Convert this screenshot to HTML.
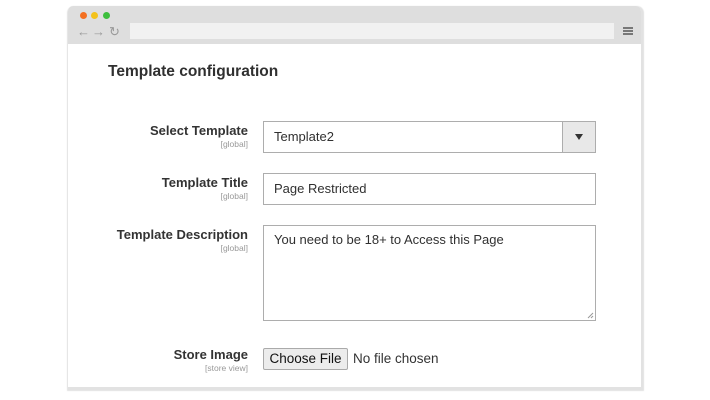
<!DOCTYPE html>
<html><head><style>
*{margin:0;padding:0;box-sizing:border-box}
body{width:710px;height:400px;background:#fff;position:relative;font-family:"Liberation Sans",sans-serif;overflow:hidden}
.frame{position:absolute;left:68px;top:6px;width:573px;height:381px;background:#fff;border-radius:5px 5px 0 0;box-shadow:1px 2px 1px 2px #e2e2e2}
.head{position:absolute;left:0;top:0;width:573px;height:38px;background:#dedede;border-radius:5px 5px 0 0}
.dot{position:absolute;top:6px;width:7px;height:7px;border-radius:50%}
.addr{position:absolute;left:62px;top:17px;width:484px;height:16px;background:#f1f1f1}
.nav{position:absolute;top:18px;font-size:13px;color:#999}
.ham{position:absolute;left:555px;top:21px;width:10px}
.ham i{display:block;height:2px;background:#777;margin-bottom:1px}
.abs{position:absolute}
h1{position:absolute;left:108px;top:63px;font-size:15.5px;font-weight:bold;color:#303030}
.lab{position:absolute;right:462px;text-align:right;font-size:13px;font-weight:bold;color:#333;white-space:nowrap}
.lab small{display:block;font-size:8.5px;font-weight:normal;color:#999;margin-top:1px}
.inp{position:absolute;left:263px;width:333px;border:1px solid #adadad;background:#fff;font-size:13px;color:#303030;padding-left:10px}
</style></head><body>
<div class="frame">
 <div class="head">
  <div class="dot" style="left:12px;background:#f36f21"></div>
  <div class="dot" style="left:23px;background:#f3c21b"></div>
  <div class="dot" style="left:35px;background:#3cbe3c"></div>
  <div class="nav" style="left:9px">←</div><div class="nav" style="left:24px">→</div><div class="nav" style="left:41px">↻</div>
  <div class="addr"></div>
  <div class="ham"><i></i><i></i><i></i></div>
 </div>
</div>
<h1>Template configuration</h1>
<div class="lab" style="top:123px">Select Template<small>[global]</small></div>
<div class="inp" style="top:121px;height:32px;line-height:30px">Template2
 <div class="abs" style="right:0;top:0;width:33px;height:30px;background:#e8e8e8;border-left:1px solid #adadad"><div class="abs" style="left:12px;top:12px;width:0;height:0;border-left:4px solid transparent;border-right:4px solid transparent;border-top:6px solid #333"></div></div>
</div>
<div class="lab" style="top:175px">Template Title<small>[global]</small></div>
<div class="inp" style="top:173px;height:32px;line-height:30px">Page Restricted</div>
<div class="lab" style="top:227px">Template Description<small>[global]</small></div>
<div class="inp" style="top:225px;height:96px;padding-top:6px">You need to be 18+ to Access this Page
 <svg class="abs" style="right:1px;bottom:1px" width="7" height="7"><path d="M6 1L1 6M6 4L4 6" stroke="#999" stroke-width="1"/></svg>
</div>
<div class="lab" style="top:347px">Store Image<small>[store view]</small></div>
<div class="abs" style="left:263px;top:348px;width:85px;height:22px;border:1px solid #aaa;border-radius:2px;background:#ececec;font-size:13.5px;color:#111;text-align:center;line-height:20px">Choose File</div>
<div class="abs" style="left:353px;top:351px;font-size:13.5px;color:#333">No file chosen</div>
</body></html>
